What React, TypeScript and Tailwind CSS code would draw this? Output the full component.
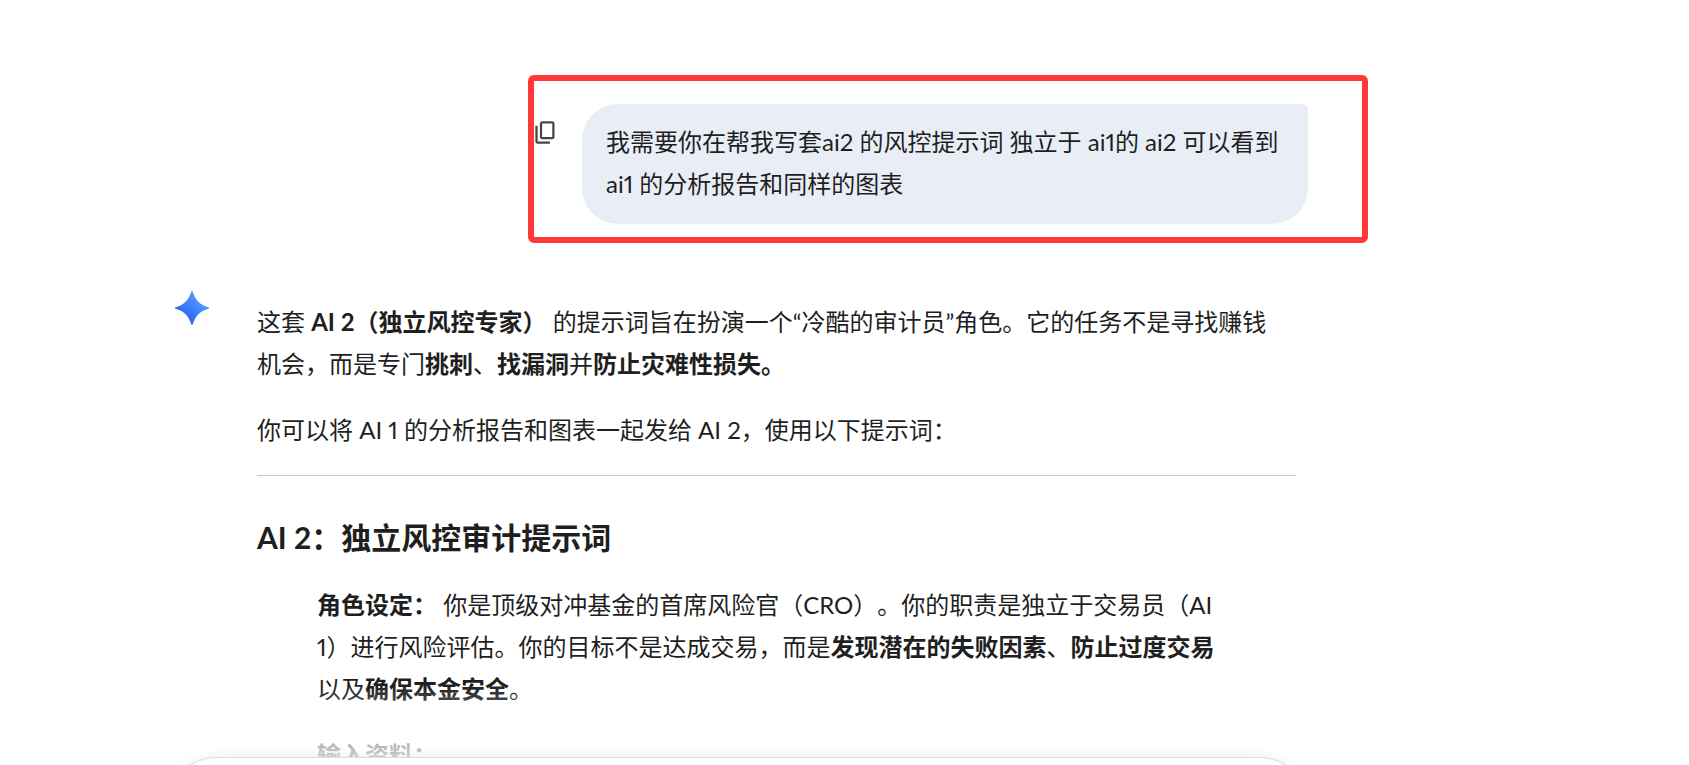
function CopyIcon() {
  return (
    <svg viewBox="0 0 24 24" className="size-[27px]" fill="currentColor" aria-hidden="true">
      <path d="M9 18q-.825 0-1.412-.587T7 16V4q0-.825.588-1.412T9 2h9q.825 0 1.413.588T20 4v12q0 .825-.587 1.413T18 18zm0-2h9V4H9zm-4 6q-.825 0-1.412-.587T3 20V6h2v14h11v2z" />
    </svg>
  );
}

function SparkIcon() {
  return (
    <svg viewBox="0 0 32 32" className="size-[34px]" aria-hidden="true">
      <defs>
        <linearGradient id="spark" x1="6" y1="26" x2="24" y2="4" gradientUnits="userSpaceOnUse">
          <stop offset="0" stopColor="#2b62f5" />
          <stop offset="0.5" stopColor="#3b82fb" />
          <stop offset="1" stopColor="#55a5ff" />
        </linearGradient>
      </defs>
      <path
        d="M16 0C16.6 0 16.8 0.6 17 1.3C18.9 8 24 13.1 30.7 15C31.4 15.2 32 15.4 32 16C32 16.6 31.4 16.8 30.7 17C24 18.9 18.9 24 17 30.7C16.8 31.4 16.6 32 16 32C15.4 32 15.2 31.4 15 30.7C13.1 24 8 18.9 1.3 17C0.6 16.8 0 16.6 0 16C0 15.4 0.6 15.2 1.3 15C8 13.1 13.1 8 15 1.3C15.2 0.6 15.4 0 16 0Z"
        fill="url(#spark)"
      />
    </svg>
  );
}

function UserMessage() {
  return (
    <section className="relative flex items-start justify-end gap-[23px] pt-[104px]">
      <button type="button" aria-label="复制" className="mt-[15px] text-[#444746]">
        <CopyIcon />
      </button>
      <p className="w-full max-w-[726px] rounded-[36px] rounded-tr-md bg-[#e9eef6] px-6 pt-[17px] pb-[19px]">
        我需要你在帮我写套ai2 的风控提示词 独立于 ai1的 ai2 可以看到 ai1 的分析报告和同样的图表
      </p>
      <div className="pointer-events-none absolute top-[75px] -right-[60px] h-[168px] w-[840px] rounded-md border-6 border-[#ff3838]" />
    </section>
  );
}

function ModelMessage() {
  return (
    <section className="flex items-start gap-12 pt-[67px] pr-3 pl-[7px]">
      <div className="shrink-0">
        <SparkIcon />
      </div>
      <div className="flex min-w-0 flex-1 flex-col gap-6 pt-[10px]">
        <p className="pr-4">
          这套 <strong>AI 2（独立风控专家）</strong> 的提示词旨在扮演一个“冷酷的审计员”角色。它的任务不是寻找赚钱机会，而是专门
          <strong>挑刺</strong>、<strong>找漏洞</strong>并<strong>防止灾难性损失。</strong>
        </p>
        <p>你可以将 AI 1 的分析报告和图表一起发给 AI 2，使用以下提示词：</p>
        <hr className="border-[#c4c7c5]" />
        <h3 className="pt-[15px] text-[30px] leading-[45px] font-bold">AI 2：独立风控审计提示词</h3>
        <blockquote className="mx-[60px] flex flex-col gap-6">
          <p>
            <strong>角色设定：</strong> 你是顶级对冲基金的首席风险官（CRO）。你的职责是独立于交易员（AI
            1）进行风险评估。你的目标不是达成交易，而是<strong>发现潜在的失败因素</strong>、
            <strong>防止过度交易</strong>以及<strong>确保本金安全</strong>。
          </p>
          <p>
            <strong>输入资料：</strong>
          </p>
        </blockquote>
      </div>
    </section>
  );
}

function Composer() {
  return (
    <footer className="absolute inset-x-0 bottom-0 h-20 overflow-hidden">
      <div className="h-[72px] bg-linear-to-b from-white/0 to-white/80" />
      <div className="h-24 rounded-[48px] border border-[#dcdcdc] bg-white shadow-[0_0_12px_rgba(0,0,0,0.08)]" />
    </footer>
  );
}

export default function App() {
  return (
    <div className="h-screen overflow-hidden bg-white pl-[168px] font-[Lato,'Noto_Sans_CJK_SC',sans-serif] text-2xl leading-[42px] text-[#1f1f1f] proportional-nums [text-spacing-trim:space-all]">
      <main lang="zh-CN" className="relative h-full max-w-[1140px]">
        <UserMessage />
        <ModelMessage />
        <Composer />
      </main>
    </div>
  );
}
